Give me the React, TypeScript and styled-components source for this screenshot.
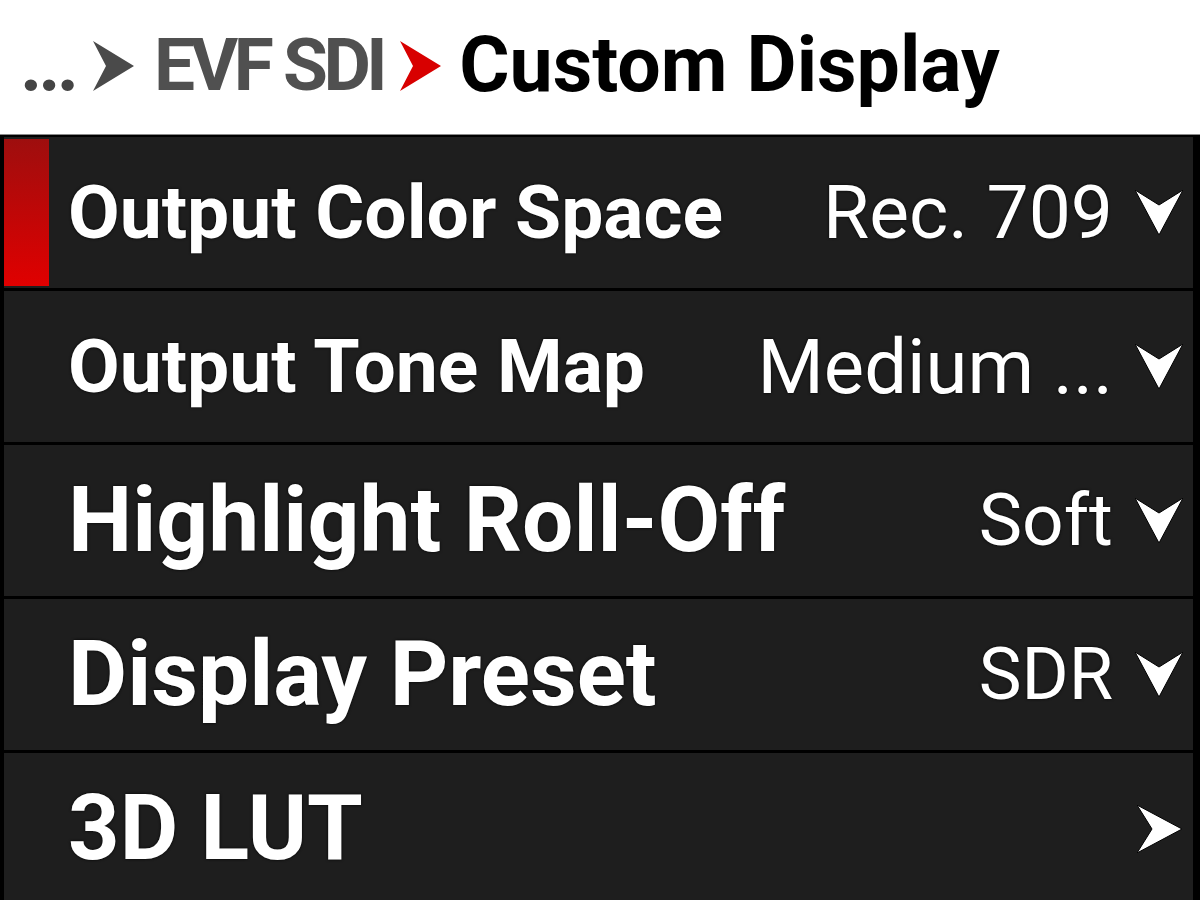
import { createGlobalStyle } from "styled-components";
import styled from "styled-components";

type Item = {
  label: string;
  value?: string;
  labelSize: number;
  valueSize?: number;
  kind: "select" | "link";
  active?: boolean;
};

const items: Item[] = [
  { label: "Output Color Space", value: "Rec. 709", labelSize: 75, valueSize: 75, kind: "select", active: true },
  { label: "Output Tone Map", value: "Medium ...", labelSize: 75, valueSize: 76, kind: "select" },
  { label: "Highlight Roll-Off", value: "Soft", labelSize: 91, valueSize: 73, kind: "select" },
  { label: "Display Preset", value: "SDR", labelSize: 91, valueSize: 72, kind: "select" },
  { label: "3D LUT", labelSize: 90, kind: "link" },
];

// arrowhead with a notch, as used in the breadcrumb and the rows
const CrumbArrow = ({ color }: { color: string }) => (
  <svg width="41" height="50" viewBox="0 0 41 50">
    <path d="M0 0 L41 25 L0 50 L13 25 Z" fill={color} />
  </svg>
);

const ChevronDown = () => (
  <svg width="48" height="45" viewBox="0 0 48 45">
    <path d="M0 0 L24 15 L48 0 L24 45 Z" fill="#fff" stroke="#000" strokeWidth="1" />
  </svg>
);

const ChevronRight = () => (
  <svg width="45" height="48" viewBox="0 0 45 48">
    <path d="M0 0 L45 24 L0 48 L15 24 Z" fill="#fff" stroke="#000" strokeWidth="1" />
  </svg>
);

const App = () => {
  return (
    <>
      <GlobalStyle />
      <Screen>
        <Header>
          <Dots>...</Dots>
          <CrumbArrow color="#4a4a4a" />
          <Crumb>EVF SDI</Crumb>
          <CrumbArrow color="#d80000" />
          <Current>Custom Display</Current>
        </Header>
        <Menu>
          {items.map((item) => (
            <Row key={item.label}>
              <Indicator $active={!!item.active} />
              <Label $size={item.labelSize}>{item.label}</Label>
              {item.value && <Value $size={item.valueSize || 77}>{item.value}</Value>}
              <IconBox>{item.kind === "select" ? <ChevronDown /> : <ChevronRight />}</IconBox>
            </Row>
          ))}
        </Menu>
      </Screen>
    </>
  );
};

export default App;

const GlobalStyle = createGlobalStyle`
  html, body {
    margin: 0;
    padding: 0;
    background: #fff;
    overflow: hidden;
  }
  body {
    font-family: Roboto, "Liberation Sans", sans-serif;
  }
`;

const Screen = styled.div`
  width: 1200px;
  height: 900px;
  display: flex;
  flex-direction: column;
  overflow: hidden;
  background: #000;
`;

const Header = styled.div`
  height: 134px;
  flex-shrink: 0;
  background: #fff;
  display: flex;
  align-items: center;
  gap: 20px;
  padding: 0 0 3px 20px;
  box-sizing: border-box;
  font-size: 77px;
  font-weight: 700;
  line-height: 1;
`;

const Dots = styled.span`
  color: #444;
  letter-spacing: -4px;
  margin-right: -2px;
`;

const Crumb = styled.span`
  color: #505050;
  font-size: 73px;
  letter-spacing: -4.5px;
  margin-right: -3px;
`;

const Current = styled.span`
  color: #000;
  margin-left: -2px;
`;

const Menu = styled.div`
  flex: 1;
  display: flex;
  flex-direction: column;
  gap: 3px;
  border-top: 1px solid #8a8a8a;
  padding: 2px 7px 0 4px;
  background: #000;
`;

const Row = styled.div`
  height: 151px;
  flex-shrink: 0;
  display: flex;
  align-items: center;
  background: #1e1e1e;
  color: #fff;
  padding-right: 10px;
`;

const Indicator = styled.div<{ $active: boolean }>`
  width: 45px;
  align-self: stretch;
  margin: 2px 19px 2px 0;
  background: ${(p) => (p.$active ? "linear-gradient(#9e0e0e, #e00000)" : "transparent")};
`;

const Label = styled.div<{ $size: number }>`
  flex: 1;
  font-size: ${(p) => p.$size}px;
  font-weight: 700;
  line-height: 1;
  white-space: nowrap;
  text-shadow: 0 0 3px #000;
`;

const Value = styled.div<{ $size: number }>`
  font-size: ${(p) => p.$size}px;
  font-weight: 400;
  line-height: 1;
  white-space: nowrap;
  text-shadow: 0 0 3px #000;
`;

const IconBox = styled.div`
  width: 48px;
  margin-left: 22px;
  display: flex;
  align-items: center;
  justify-content: center;
`;
